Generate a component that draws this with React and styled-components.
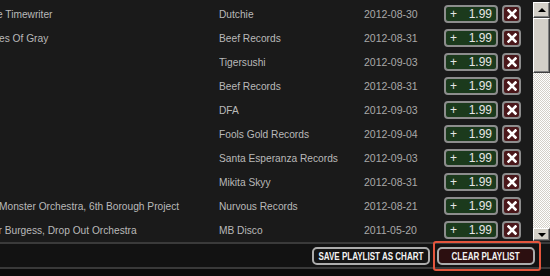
import React from 'react';
import styled, { createGlobalStyle } from 'styled-components';

const GlobalStyle = createGlobalStyle`
  html, body {
    margin: 0;
    padding: 0;
    background: #0c0c0c;
    overflow: hidden;
  }
  body {
    font-family: "Liberation Sans", Arial, sans-serif;
  }
`;

const Page = styled.div`
  width: 550px;
  height: 276px;
  background: #0c0c0c;
`;

const ListArea = styled.div`
  display: flex;
  height: 242px;
  background: #1a1a1a;
`;

const Rows = styled.div`
  flex: 1;
  padding-top: 2px;
  overflow: hidden;
`;

const Row = styled.div`
  display: flex;
  align-items: center;
  height: 24px;
  color: #b9b9b9;
  font-size: 10.2px;
  white-space: nowrap;
`;

const TitleCell = styled.div`
  width: 219px;
  overflow: hidden;
  span {
    display: inline-block;
    margin-left: ${p => p.$shift || 0}px;
  }
`;

const LabelCell = styled.div`
  width: 145px;
  overflow: hidden;
`;

const DateCell = styled.div`
  width: 80px;
  font-size: 10.5px;
  color: #a9a9a9;
`;

const PriceButton = styled.div`
  box-sizing: border-box;
  width: 54px;
  height: 18px;
  display: flex;
  align-items: center;
  justify-content: space-between;
  padding: 0 4px;
  border: 2px solid #8d8d8d;
  border-radius: 4px;
  background: #1b3a1c;
  color: #e6e6e6;
  font-size: 12px;
`;

const RemoveButton = styled.div`
  box-sizing: border-box;
  width: 19px;
  height: 18px;
  margin-left: 4px;
  display: flex;
  align-items: center;
  justify-content: center;
  border: 2px solid #8d8d8d;
  border-radius: 4px;
  background: #4a171a;
`;

const Scrollbar = styled.div`
  width: 17px;
  display: flex;
  flex-direction: column;
  padding-top: 2px;
  padding-bottom: 1px;
`;

const ScrollButton = styled.div`
  box-sizing: border-box;
  height: ${p => p.$h}px;
  display: flex;
  align-items: center;
  justify-content: center;
  background: #d4d0c8;
  border-top: 1px solid #ffffff;
  border-left: 1px solid #ffffff;
  border-right: 1px solid #404040;
  border-bottom: 1px solid #404040;
  box-shadow: inset -1px -1px 0 #808080;
`;

const Thumb = styled(ScrollButton)`
  height: 55px;
`;

const Track = styled.div`
  flex: 1;
  background: repeating-conic-gradient(#ffffff 0 25%, #d4d0c8 0 50%) 0 0 / 2px 2px;
`;

const Arrow = styled.div`
  width: 0;
  height: 0;
  border-left: 4px solid transparent;
  border-right: 4px solid transparent;
  ${p => p.$down
    ? 'border-top: 4px solid #000;'
    : 'border-bottom: 4px solid #000;'}
`;

const Footer = styled.div`
  border-top: 2px solid #3a3a3a;
  border-bottom: 2px solid #393939;
  height: 23px;
  background: #121212;
  display: flex;
  align-items: center;
  justify-content: flex-end;
  gap: 7px;
  padding-right: 15px;
`;

const FooterButton = styled.div`
  position: relative;
  box-sizing: border-box;
  width: ${p => p.$w}px;
  height: 18px;
  display: flex;
  align-items: center;
  justify-content: center;
  border: 2px solid #acacac;
  border-radius: 5px;
  background: ${p => (p.$danger ? '#2c0f10' : '#141414')};
  color: #f2f2f2;
  font-size: 11px;
  font-weight: bold;
  white-space: nowrap;
  span {
    display: inline-block;
    transform: scaleX(0.73);
  }
  ${p => p.$highlight && `
    &::after {
      content: '';
      position: absolute;
      top: -8px;
      left: -6px;
      right: -8px;
      bottom: -8px;
      border: 2px solid #e4553d;
      border-radius: 3px;
    }
  `}
`;

const tracks = [
  { title: 'e Timewriter', shift: -3, label: 'Dutchie', date: '2012-08-30' },
  { title: 'es Of Gray', shift: -1, label: 'Beef Records', date: '2012-08-31' },
  { title: '', label: 'Tigersushi', date: '2012-09-03' },
  { title: '', label: 'Beef Records', date: '2012-08-31' },
  { title: '', label: 'DFA', date: '2012-09-03' },
  { title: '', label: 'Fools Gold Records', date: '2012-09-04' },
  { title: '', label: 'Santa Esperanza Records', date: '2012-09-03' },
  { title: '', label: 'Mikita Skyy', date: '2012-08-31' },
  { title: 'Monster Orchestra, 6th Borough Project', shift: -1, label: 'Nurvous Records', date: '2012-08-21' },
  { title: 'r Burgess, Drop Out Orchestra', shift: -1.5, label: 'MB Disco', date: '2011-05-20' },
];

function Cross() {
  return (
    <svg width="10" height="10" viewBox="0 0 10 10">
      <path d="M1.5 1.5 L8.5 8.5 M8.5 1.5 L1.5 8.5" stroke="#ffffff" strokeWidth="2.6" strokeLinecap="square" />
    </svg>
  );
}

export default function App() {
  return (
    <Page>
      <GlobalStyle />
      <ListArea>
        <Rows>
          {tracks.map((t, i) => (
            <Row key={i}>
              <TitleCell $shift={t.shift}><span>{t.title}</span></TitleCell>
              <LabelCell>{t.label}</LabelCell>
              <DateCell>{t.date}</DateCell>
              <PriceButton><span>+</span><span>1.99</span></PriceButton>
              <RemoveButton><Cross /></RemoveButton>
            </Row>
          ))}
        </Rows>
        <Scrollbar>
          <ScrollButton $h={16}><Arrow /></ScrollButton>
          <Thumb $h={55} />
          <Track />
          <ScrollButton $h={13}><Arrow $down /></ScrollButton>
        </Scrollbar>
      </ListArea>
      <Footer>
        <FooterButton $w={118}><span>SAVE PLAYLIST AS CHART</span></FooterButton>
        <FooterButton $w={98} $danger $highlight><span>CLEAR PLAYLIST</span></FooterButton>
      </Footer>
    </Page>
  );
}
